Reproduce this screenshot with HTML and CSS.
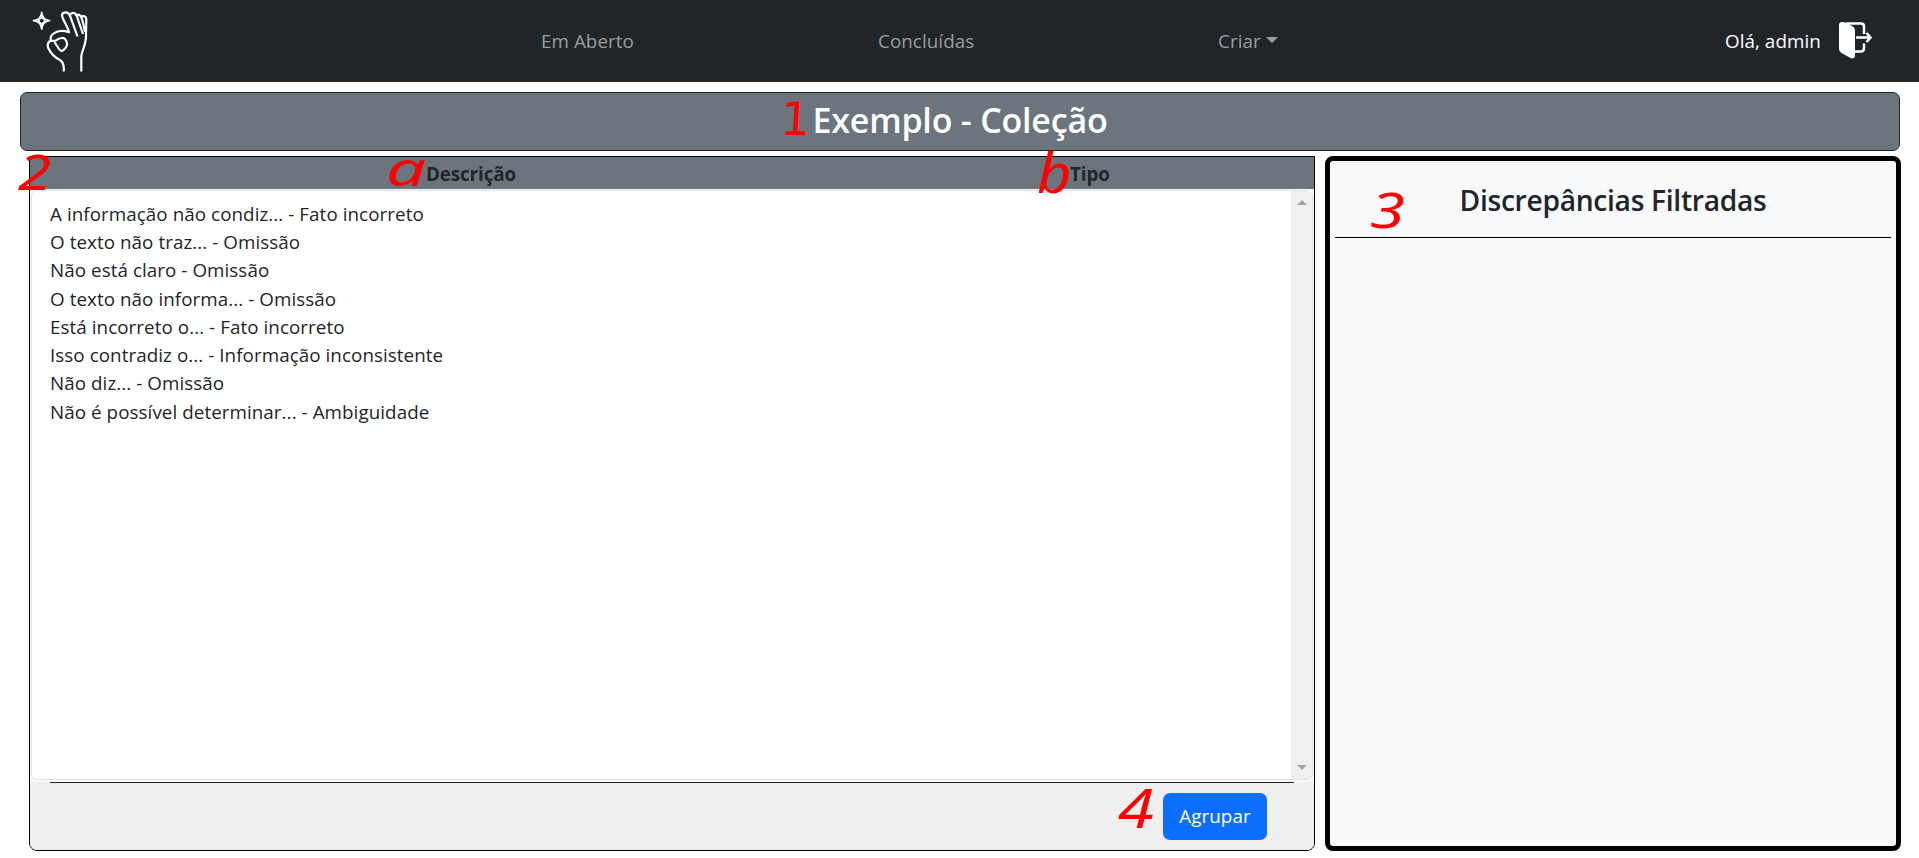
FILE: index.html
```html
<!DOCTYPE html>
<html lang="pt-BR">
<head>
<meta charset="utf-8">
<title>Exemplo - Coleção</title>
<link rel="stylesheet" href="styles.css">
</head>
<body>
<nav class="navbar">
  <svg class="logo" viewBox="0 0 60 66" fill="none" stroke="#fff" stroke-width="2.2" stroke-linejoin="round">
    <path d="M11.700 5.500Q12.200 12.700 19.500 13.700Q12.200 14.700 11.700 22Q11.200 14.700 3.500 13.700Q11.200 12.700 11.700 5.500Z" stroke-width="1.800"/>
    <path d="M11.700 10.500L15 13.700L11.700 17L8.500 13.700Z" stroke-width="1.600"/>
    <circle cx="11.700" cy="13.700" r="1.800" fill="#212529" stroke="none"/>
    <path d="M33.800 64.500V61C33.500 57 32.500 54.500 30 53C24 50 20 45 18 40.500C17 37 18.500 34 21 33.800L25.700 33.700C28 32 29.500 31.200 31.700 31C35 30.500 35.500 32.500 36.500 34.500C38 38 37 39.500 35 41.500C32.500 44.300 31 45 29 42C27.500 39.500 26 37.500 24.500 35"/>
    <path d="M20.700 34V30C21.500 27 26 24.500 30 24C33 23.700 35.500 24 39 25.300C38.500 22 34.500 15.500 32.500 10.500C31 6 34 5.300 36.500 5.300C39 5.500 39.500 7.500 40.500 10L47.500 29.500"/>
    <path d="M39.500 8Q42 4.800 45 6.500C47 8 47.500 10.500 48.500 14L53 27"/>
    <path d="M46 9Q48.500 6 51 9.500Q53 14 55 25"/>
    <path d="M50.500 9.500Q56.500 8 56.300 12.500L56 29.500C56 37 52 44 51.300 49V64.500"/>
  </svg>
  <a class="nav-link open">Em Aberto</a>
  <a class="nav-link done">Concluídas</a>
  <a class="nav-link create">Criar<i class="caret"></i></a>
  <span class="greeting">Olá, admin</span>
  <svg class="exit" viewBox="0 0 36 40">
    <path d="M8 2.500H23Q26 2.500 26 5.500V13M26 22.500V27Q26 30.500 23 30.500H16M18 16.500H32M28.500 12L32.500 16.500L28.500 21" fill="none" stroke="#fff" stroke-width="2.500"/>
    <path d="M4 1H6L14 5Q17 6.500 17 10V34Q17 38.500 12.500 37L3.500 32Q1 30.500 1 28V4Q1 1 4 1Z" fill="#fff"/>
  </svg>
</nav>
<header class="title"><h1>Exemplo - Coleção</h1><span class="mark m1">1</span></header>
<main class="panels">
  <section class="list-panel">
    <div class="list-head"><b class="desc">Descrição</b><b class="type">Tipo</b></div>
    <div class="list-box">
      <ul class="list">
        <li>A informação não condiz... - Fato incorreto</li>
        <li>O texto não traz... - Omissão</li>
        <li>Não está claro - Omissão</li>
        <li>O texto não informa... - Omissão</li>
        <li>Está incorreto o... - Fato incorreto</li>
        <li>Isso contradiz o... - Informação inconsistente</li>
        <li>Não diz... - Omissão</li>
        <li>Não é possível determinar... - Ambiguidade</li>
      </ul>
      <div class="scrollbar"><i class="up"></i><i class="down"></i></div>
    </div>
    <footer class="list-foot"><hr><button>Agrupar</button></footer>
    <span class="mark m2">2</span>
    <span class="mark ma">a</span>
    <span class="mark mb">b</span>
    <span class="mark m4">4</span>
  </section>
  <section class="filter-panel">
    <h2>Discrepâncias Filtradas</h2>
    <span class="mark m3">3</span>
  </section>
</main>
</body>
</html>
```
FILE: styles.css
```css
* { box-sizing: border-box; }
body { margin: 0; height: 858px; overflow: hidden; background: #fff; color: #212529; font: 18.8px/28.28px "Open Sans", sans-serif; letter-spacing: .07px; }
.navbar { display: flex; align-items: center; height: 82px; background: #212529; }
.logo { width: 60px; height: 66px; margin: 0 0 2px 30px; }
.nav-link { color: #9b9d9e; white-space: nowrap; }
.open { width: 337px; margin-left: 451px; }
.done { width: 340px; }
.create { width: 507px; }
.caret { display: inline-block; margin-left: 5px; vertical-align: 5px; border: 6px solid transparent; border-top-color: #9b9d9e; border-bottom: 0; }
.greeting { width: 113px; color: #fff; white-space: nowrap; }
.exit { width: 36px; height: 40px; }
.title { position: relative; display: flex; justify-content: center; align-items: center; height: 59px; margin: 10px 19px 5px 20px; padding-bottom: 4px; border: 1px solid #212529; border-radius: 7px; background: #6c757d; color: #fff; }
h1 { margin: 0; font-size: 34px; line-height: 40px; font-weight: 600; letter-spacing: -.2px; }
.panels { display: flex; gap: 10px; height: 695px; padding-left: 29px; }
.list-panel { position: relative; display: flex; flex-direction: column; width: 1286px; border: 1px solid #000; border-radius: 0 0 8px 8px; background: #f8f9fa; }
.list-head { display: flex; height: 32px; line-height: 34px; background: #6c757d; letter-spacing: -.1px; }
.desc { flex: none; width: 1040px; padding-left: 396px; }
.list-box { display: flex; justify-content: space-between; height: 590px; margin: 1px 1px 2px; border: 1px solid #dee2e6; border-radius: 7px; background: #fff; overflow: hidden; }
.list { margin: 0; padding: 8.8px 0 0 18px; list-style: none; white-space: nowrap; }
.scrollbar { display: flex; flex-direction: column; justify-content: space-between; align-items: center; width: 21px; padding: 9px 0 9px; background: #f0f0f0; }
.up { border: 5px solid transparent; border-bottom-color: #a3a3a3; border-top: 0; }
.down { border: 5px solid transparent; border-top-color: #a3a3a3; border-bottom: 0; }
.list-foot { flex: 1; display: flex; flex-direction: column; background: #efefef; border-radius: 0 0 7px 7px; }
hr { width: 1244px; height: 1px; margin: 0 0 10px 20px; border: 0; background: #212529; }
button { width: 104px; height: 47px; margin-left: 1133px; padding: 0; border: 0; border-radius: 7px; background: #0d6efd; color: #fff; font: inherit; letter-spacing: .1px; }
.filter-panel { position: relative; width: 576px; padding: 0 5px; border: 5px solid #000; border-radius: 8px; background: #f8f9fa; }
h2 { height: 77px; margin: 0; padding-top: 22px; border-bottom: 1px solid #000; font-size: 28.2px; line-height: 34px; font-weight: 600; letter-spacing: -.3px; text-align: center; }

/* Red callout marks */
.mark { position: absolute; color: #f00; line-height: 1; letter-spacing: 0; font-family: "Noto Sans", sans-serif; font-style: italic; transform-origin: 0 0; }
.m1 { left: 761px; top: 3px; font: 46px/1 "DejaVu Sans", sans-serif; transform: skewX(-3deg); }
.m2 { left: -12px; top: -10px; font-size: 49px; transform: scaleX(1.22); }
.ma { left: 356px; top: -12px; font-size: 47px; transform: scaleX(1.5); }
.mb { left: 1007px; top: -12px; font-size: 54px; transform: scaleX(1.1); }
.m4 { left: 1088px; top: 623px; font-size: 54px; transform: scaleX(1.2); }
.m3 { left: 40px; top: 24px; font-size: 49px; transform: scaleX(1.3); }
```
